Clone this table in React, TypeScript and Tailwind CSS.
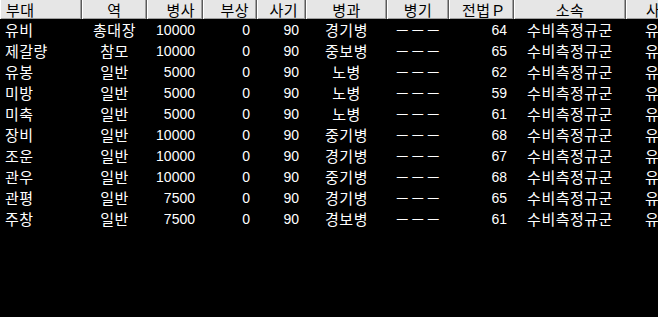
const cols = [
  { key: "unit", label: "부대", w: "w-[82px]", align: "left" },
  { key: "role", label: "역", w: "w-[65px]", align: "center" },
  { key: "troops", label: "병사", w: "w-[56px]", align: "right" },
  { key: "wound", label: "부상", w: "w-[54px]", align: "right" },
  { key: "morale", label: "사기", w: "w-[49px]", align: "right" },
  { key: "branch", label: "병과", w: "w-[81px]", align: "center" },
  { key: "weapon", label: "병기", w: "w-[62px]", align: "center" },
  { key: "tactic", label: "전법Ｐ", w: "w-[65px]", align: "right" },
  { key: "corps", label: "소속", w: "w-[112px]", align: "center" },
  { key: "cmd", label: "사령관", w: "w-[80px]", align: "last" },
] as const;

type Row = [string, string, string, string, string, string, string, string, string, string];

const rows: Row[] = [
  ["유비", "총대장", "10000", "0", "90", "경기병", "－－－", "64", "수비측정규군", "유비"],
  ["제갈량", "참모", "10000", "0", "90", "중보병", "－－－", "65", "수비측정규군", "유비"],
  ["유봉", "일반", "5000", "0", "90", "노병", "－－－", "62", "수비측정규군", "유비"],
  ["미방", "일반", "5000", "0", "90", "노병", "－－－", "59", "수비측정규군", "유비"],
  ["미축", "일반", "5000", "0", "90", "노병", "－－－", "61", "수비측정규군", "유비"],
  ["장비", "일반", "10000", "0", "90", "중기병", "－－－", "68", "수비측정규군", "유비"],
  ["조운", "일반", "10000", "0", "90", "경기병", "－－－", "67", "수비측정규군", "유비"],
  ["관우", "일반", "10000", "0", "90", "중기병", "－－－", "68", "수비측정규군", "유비"],
  ["관평", "일반", "7500", "0", "90", "경기병", "－－－", "65", "수비측정규군", "유비"],
  ["주창", "일반", "7500", "0", "90", "경보병", "－－－", "61", "수비측정규군", "유비"],
];

const alignClass = {
  left: "justify-start pl-[5px]",
  center: "justify-center",
  right: "justify-end pr-[7px]",
  last: "justify-start pl-[19px]",
};

const ko = "font-['Noto_Sans_CJK_KR',sans-serif] text-[15px] tracking-[0.5px]";
const num = "font-['Liberation_Sans',sans-serif] text-[14px]";

export default function App() {
  return (
    <div className="w-[658px] h-[317px] bg-black overflow-hidden select-none">
      <div className="flex h-[19px] w-max">
        {cols.map((c) => (
          <div
            key={c.key}
            className={`${c.w} shrink-0 h-full flex items-center bg-[#e6e6e6] text-black border-l border-l-white border-r border-r-[#5a5a5a] shadow-[inset_-1px_-1px_0_#a0a0a0] leading-none ${alignClass[c.align]} ${ko}`}
          >
            {c.label}
          </div>
        ))}
      </div>
      <div className="flex flex-col">
        {rows.map((r, i) => (
          <div key={i} className="flex h-[21px] w-max text-white">
            {r.map((v, j) => {
              const c = cols[j];
              const isNum = /^[0-9]+$/.test(v);
              return (
                <div
                  key={j}
                  className={`${c.w} shrink-0 flex items-center leading-none whitespace-nowrap ${alignClass[c.align]} ${isNum ? num : ko} ${j === 2 ? "pr-[8px]" : ""}`}
                >
                  {v}
                </div>
              );
            })}
          </div>
        ))}
      </div>
    </div>
  );
}
